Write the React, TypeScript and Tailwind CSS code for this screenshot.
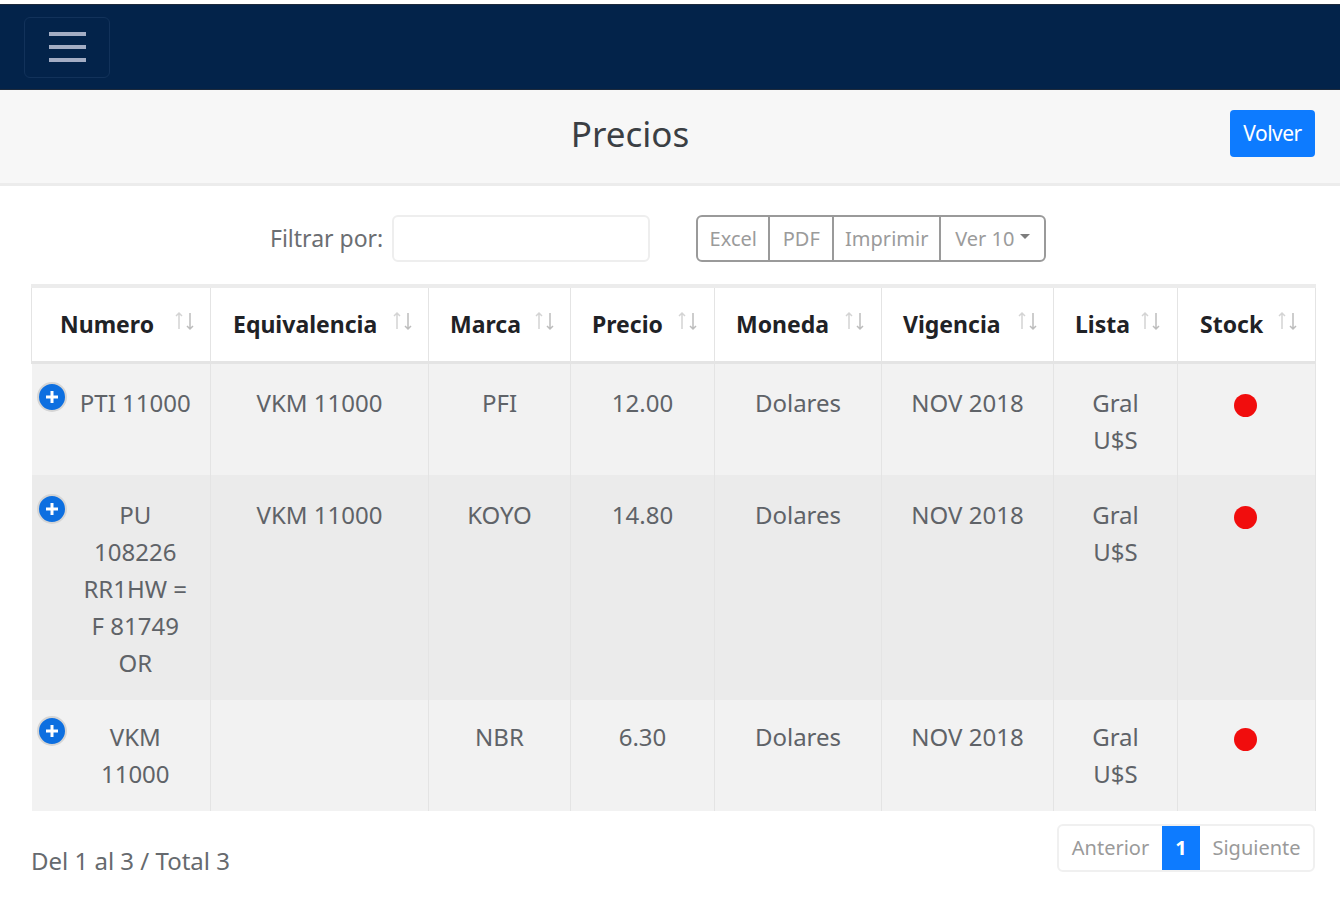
import React from "react";

type Row = {
  numero: string[];
  equivalencia: string;
  marca: string;
  precio: string;
  striped: string;
  cellTop: string;
  badgeTop: string;
  dotTop: string;
  numeroCell: string;
};

const rows: Row[] = [
  {
    numero: ["PTI 11000"],
    equivalencia: "VKM 11000",
    marca: "PFI",
    precio: "12.00",
    striped: "bg-[#f2f2f2]",
    cellTop: "pt-[20px]",
    badgeTop: "top-[18px]",
    dotTop: "pt-[25px]",
    numeroCell: "h-[113px]",
  },
  {
    numero: ["PU", "108226", "RR1HW =", "F 81749", "OR"],
    equivalencia: "VKM 11000",
    marca: "KOYO",
    precio: "14.80",
    striped: "bg-[#ebebeb]",
    cellTop: "pt-[21px]",
    badgeTop: "top-[19px]",
    dotTop: "pt-[26px]",
    numeroCell: "h-[111px]",
  },
  {
    numero: ["VKM", "11000"],
    equivalencia: "",
    marca: "NBR",
    precio: "6.30",
    striped: "bg-[#f2f2f2]",
    cellTop: "pt-[18px]",
    badgeTop: "top-[16px]",
    dotTop: "pt-[23px]",
    numeroCell: "h-[111px]",
  },
];

const headers = [
  { label: "Numero", width: "w-[179px]", pad: "pl-[28px]", sort: "left-[142px]" },
  { label: "Equivalencia", width: "w-[218px]", pad: "pl-[22px]", sort: "left-[181px]" },
  { label: "Marca", width: "w-[142px]", pad: "pl-[21px]", sort: "left-[105px]" },
  { label: "Precio", width: "w-[144px]", pad: "pl-[21px]", sort: "left-[106px]" },
  { label: "Moneda", width: "w-[167px]", pad: "pl-[21px]", sort: "left-[129px]" },
  { label: "Vigencia", width: "w-[172px]", pad: "pl-[21px]", sort: "left-[135px]" },
  { label: "Lista", width: "w-[124px]", pad: "pl-[21px]", sort: "left-[86px]" },
  { label: "Stock", width: "w-[138px]", pad: "pl-[22px]", sort: "left-[99px]" },
];

function SortArrows({ className }: { className: string }) {
  return (
    <svg className={`absolute top-[23px] ${className}`} width="22" height="20" viewBox="0 0 22 20" fill="none">
      <path d="M5 18V2M2 5l3-3 3 3" stroke="#d4d4d4" strokeWidth="1.5" />
      <path d="M16 2v16M13 15l3 3 3-3" stroke="#bdbdbd" strokeWidth="1.5" />
    </svg>
  );
}

function PlusBadge({ top }: { top: string }) {
  return (
    <span
      className={`absolute left-[5px] ${top} flex h-[30px] w-[30px] items-center justify-center rounded-full border-[2px] border-[#d5d5d5] bg-[#0d6fe0]`}
    >
      <svg width="16" height="16" viewBox="0 0 16 16">
        <path d="M8 2v12M2 8h12" stroke="#fff" strokeWidth="3" />
      </svg>
    </span>
  );
}

const cell = "border-r border-[#e4e4e4] align-top text-center";

export default function App() {
  return (
    <div className="h-[900px] w-[1340px] overflow-hidden bg-white pt-[4px] font-['Noto_Sans','Open_Sans',sans-serif] text-[24px] leading-[37px] text-[#5f6368]">
      {/* Navbar */}
      <nav className="flex h-[86px] items-center border-y border-[#1d2a3c] bg-[#03234a] pl-[24px]">
        <button className="flex h-[61px] w-[86px] flex-col items-center justify-center gap-[9px] rounded-[6px] border border-[#12325a]">
          <span className="h-[4px] w-[37px] bg-[#a3adc4]" />
          <span className="h-[4px] w-[37px] bg-[#a3adc4]" />
          <span className="h-[4px] w-[37px] bg-[#a3adc4]" />
        </button>
      </nav>

      {/* Title band */}
      <header className="relative flex h-[96px] items-center justify-center border-b-[3px] border-[#ececec] bg-[#f7f7f7]">
        <h1 className="mb-[6px] mr-[80px] text-[35px] leading-none text-[#3b3f44]">Precios</h1>
        <button className="absolute right-[25px] top-[20px] h-[47px] w-[85px] rounded-[4px] bg-[#0d7bff] text-[21px] leading-none tracking-[-0.5px] text-white">
          Volver
        </button>
      </header>

      {/* Filter and buttons */}
      <div className="flex h-[98px] items-start pt-[29px]">
        <label className="ml-[270px] mt-[5px] text-[23px] leading-[37px] text-[#6b6e72]">Filtrar por:</label>
        <input className="ml-[9px] h-[47px] w-[258px] rounded-[6px] border-2 border-[#eeeeee] bg-white" />
        <div className="ml-[46px] flex h-[47px] rounded-[6px] border-2 border-[#9a9a9a] text-[20px] leading-none text-[#9b9b9b]">
          <span className="flex w-[72px] items-center justify-center border-r-2 border-[#9a9a9a]">Excel</span>
          <span className="flex w-[64px] items-center justify-center border-r-2 border-[#9a9a9a]">PDF</span>
          <span className="flex w-[107px] items-center justify-center border-r-2 border-[#9a9a9a]">Imprimir</span>
          <span className="flex w-[103px] items-center justify-center gap-[6px]">
            Ver 10
            <span className="mb-[4px] h-0 w-0 border-x-[5px] border-t-[5px] border-x-transparent border-t-[#7d7d7d]" />
          </span>
        </div>
      </div>

      {/* Table */}
      <div className="ml-[31px] w-[1284px]">
        <table className="w-full table-fixed border-collapse border-t-[4px] border-[#ececec]">
          <thead>
            <tr className="h-[76px] border-b-[3px] border-[#e4e4e4]">
              {headers.map((h, i) => (
                <th
                  key={h.label}
                  className={`relative ${h.width} ${h.pad} border-r border-[#e4e4e4] text-left text-[23px] font-bold leading-none text-[#1f2226] ${i === 0 ? "border-l" : ""}`}
                >
                  {h.label}
                  <SortArrows className={h.sort} />
                </th>
              ))}
            </tr>
          </thead>
          <tbody>
            {rows.map((r) => (
              <tr key={r.numero[0]} className={`${r.striped} align-top`}>
                <td className={`${cell} ${r.cellTop} ${r.numeroCell} relative pb-[19px] pl-[33px] pr-[4px]`}>
                  <PlusBadge top={r.badgeTop} />
                  {r.numero.map((line) => (
                    <div key={line} className="whitespace-nowrap">
                      {line}
                    </div>
                  ))}
                </td>
                <td className={`${cell} ${r.cellTop}`}>{r.equivalencia}</td>
                <td className={`${cell} ${r.cellTop}`}>{r.marca}</td>
                <td className={`${cell} ${r.cellTop}`}>{r.precio}</td>
                <td className={`${cell} ${r.cellTop}`}>Dolares</td>
                <td className={`${cell} ${r.cellTop}`}>NOV 2018</td>
                <td className={`${cell} ${r.cellTop}`}>
                  Gral
                  <br />
                  U$S
                </td>
                <td className={`${cell} ${r.dotTop} pr-[3px]`}>
                  <span className="inline-block h-[23px] w-[23px] rounded-full bg-[#f10d0d]" />
                </td>
              </tr>
            ))}
          </tbody>
        </table>

        {/* Footer */}
        <div className="flex items-start justify-between pt-[13px]">
          <span className="mt-[18px] text-[#666a6e]">Del 1 al 3 / Total 3</span>
          <div className="flex h-[48px] rounded-[6px] border-2 border-[#f0f0f0] text-[20px] leading-none text-[#9a9a9a]">
            <span className="flex w-[103px] items-center justify-center">Anterior</span>
            <span className="flex w-[38px] items-center justify-center bg-[#0d7bff] font-bold text-white">1</span>
            <span className="flex w-[113px] items-center justify-center">Siguiente</span>
          </div>
        </div>
      </div>
    </div>
  );
}
